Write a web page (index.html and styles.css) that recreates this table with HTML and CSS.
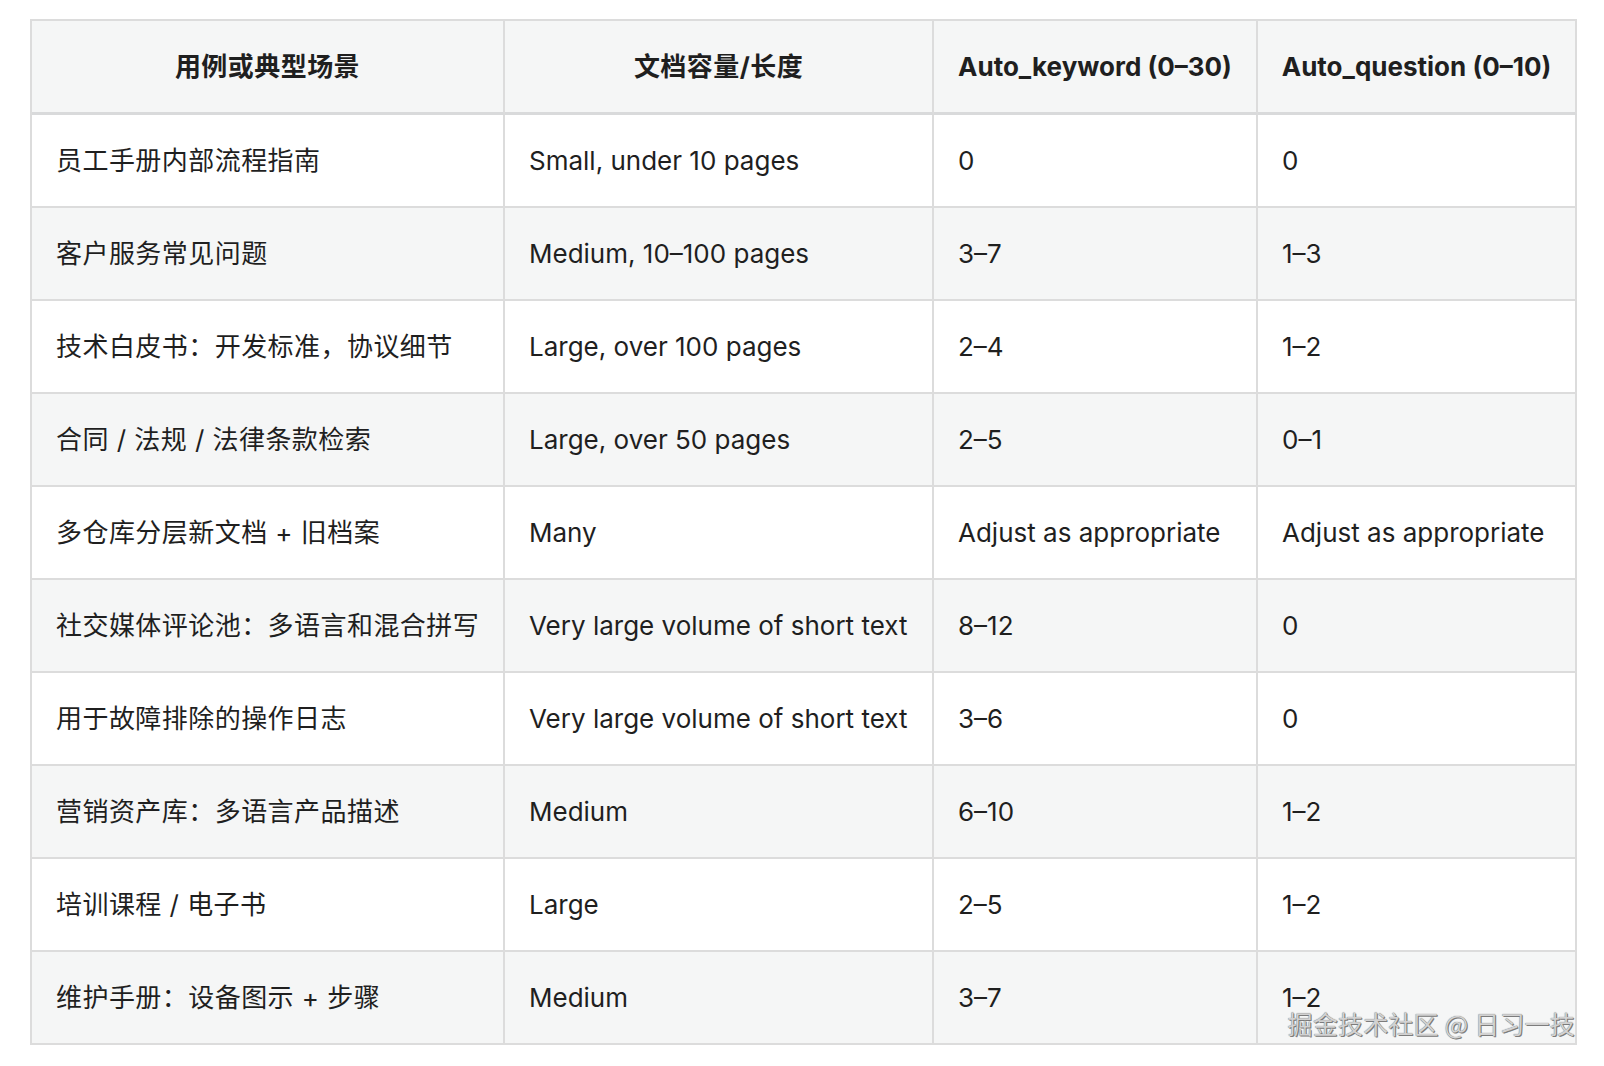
FILE: index.html
```html
<!DOCTYPE html>
<html lang="zh-CN">
<head>
<meta charset="utf-8">
<title>Auto keyword / question 配置表</title>
<link rel="stylesheet" href="styles.css">
</head>
<body>
<div class="page">
  <div class="table-wrap">
    <table class="grid">
      <thead>
        <tr>
          <th class="c1 zh">用例或典型场景</th>
          <th class="c2 zh">文档容量/长度</th>
          <th class="c3">Auto_keyword (0–30)</th>
          <th class="c4">Auto_question (0–10)</th>
        </tr>
      </thead>
      <tbody>
        <tr><td>员工手册内部流程指南</td><td>Small, under 10 pages</td><td>0</td><td>0</td></tr>
        <tr><td>客户服务常见问题</td><td>Medium, 10–100 pages</td><td>3–7</td><td>1–3</td></tr>
        <tr><td>技术白皮书：开发标准，协议细节</td><td>Large, over 100 pages</td><td>2–4</td><td>1–2</td></tr>
        <tr><td>合同 / 法规 / 法律条款检索</td><td>Large, over 50 pages</td><td>2–5</td><td>0–1</td></tr>
        <tr><td>多仓库分层新文档 + 旧档案</td><td>Many</td><td>Adjust as appropriate</td><td>Adjust as appropriate</td></tr>
        <tr><td>社交媒体评论池：多语言和混合拼写</td><td>Very large volume of short text</td><td>8–12</td><td>0</td></tr>
        <tr><td>用于故障排除的操作日志</td><td>Very large volume of short text</td><td>3–6</td><td>0</td></tr>
        <tr><td>营销资产库：多语言产品描述</td><td>Medium</td><td>6–10</td><td>1–2</td></tr>
        <tr><td>培训课程 / 电子书</td><td>Large</td><td>2–5</td><td>1–2</td></tr>
        <tr><td>维护手册：设备图示 + 步骤</td><td>Medium</td><td>3–7</td><td>1–2</td></tr>
      </tbody>
    </table>
    <div class="watermark">掘金技术社区 @ 日习一技</div>
  </div>
</div>
</body>
</html>
```

FILE: styles.css
```css
html, body {
  margin: 0;
  padding: 0;
  background: #ffffff;
}

body {
  font-family: Inter, "Noto Sans CJK SC", sans-serif;
  color: #1f1f1f;
}

.page {
  padding: 19px 0 0 30px;
}

.table-wrap {
  position: relative;
  width: 1547px;
}

.grid {
  table-layout: fixed;
  width: 1547px;
  border-collapse: separate;
  border-spacing: 0;
  border-top: 2px solid #dcdcdc;
  border-left: 2px solid #dcdcdc;
}

.grid th,
.grid td {
  box-sizing: border-box;
  border-right: 2px solid #dcdcdc;
  border-bottom: 2px solid #dcdcdc;
  font-size: 26px;
  line-height: 26px;
  vertical-align: middle;
  white-space: nowrap;
}

.grid th {
  height: 94px;
  padding: 1px 4px 0;
  background: #f5f6f6;
  border-bottom: 3px solid #d9dadb;
  font-weight: 700;
  text-align: center;
}

.grid td {
  height: 93px;
  padding: 0 0 0 24px;
  font-weight: 400;
  text-align: left;
}

.grid td:first-child,
.grid th.zh {
  letter-spacing: 0.45px;
}

.grid tbody tr:nth-child(even) td {
  background: #f5f6f6;
}

.c1 { width: 473px; }
.c2 { width: 429px; }
.c3 { width: 324px; }
.c4 { width: 319px; }

.watermark {
  position: absolute;
  right: 2px;
  bottom: 10px;
  font-family: "Noto Sans CJK SC", sans-serif;
  font-size: 25px;
  line-height: 24px;
  letter-spacing: 0.2px;
  color: #d2d2d2;
  text-shadow: 0 0 1px #5a5a5a, 1px 1px 0 #808080;
  white-space: nowrap;
}
```
